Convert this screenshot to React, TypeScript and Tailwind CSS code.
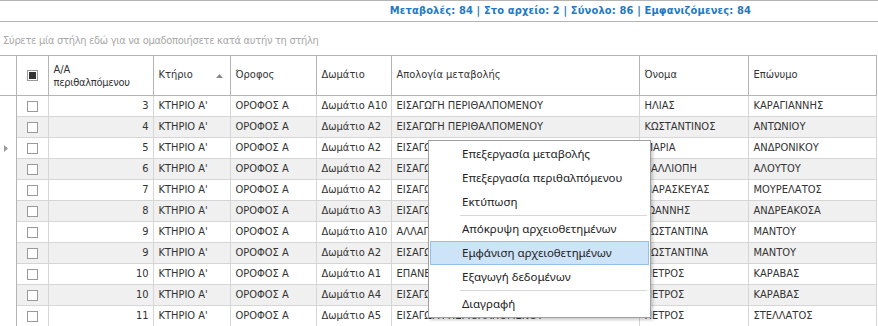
import React from 'react';

const ROWS = [
  ['3', 'Δωμάτιο A10', 'ΕΙΣΑΓΩΓΗ ΠΕΡΙΘΑΛΠΟΜΕΝΟΥ', 'ΗΛΙΑΣ', 'ΚΑΡΑΓΙΑΝΝΗΣ'],
  ['4', 'Δωμάτιο A2', 'ΕΙΣΑΓΩΓΗ ΠΕΡΙΘΑΛΠΟΜΕΝΟΥ', 'ΚΩΣΤΑΝΤΙΝΟΣ', 'ΑΝΤΩΝΙΟΥ'],
  ['5', 'Δωμάτιο A2', 'ΕΙΣΑΓΩΓΗ ΠΕΡΙΘΑΛΠΟΜΕΝΟΥ', 'ΜΑΡΙΑ', 'ΑΝΔΡΟΝΙΚΟΥ'],
  ['6', 'Δωμάτιο A2', 'ΕΙΣΑΓΩΓΗ ΠΕΡΙΘΑΛΠΟΜΕΝΟΥ', 'ΚΑΛΛΙΟΠΗ', 'ΑΛΟΥΤΟΥ'],
  ['7', 'Δωμάτιο A2', 'ΕΙΣΑΓΩΓΗ ΠΕΡΙΘΑΛΠΟΜΕΝΟΥ', 'ΠΑΡΑΣΚΕΥΑΣ', 'ΜΟΥΡΕΛΑΤΟΣ'],
  ['8', 'Δωμάτιο A3', 'ΕΙΣΑΓΩΓΗ ΠΕΡΙΘΑΛΠΟΜΕΝΟΥ', 'ΙΩΑΝΝΗΣ', 'ΑΝΔΡΕΑΚΟΣΑ'],
  ['9', 'Δωμάτιο A10', 'ΑΛΛΑΓΗ ΔΩΜΑΤΙΟΥ', 'ΚΩΣΤΑΝΤΙΝΑ', 'ΜΑΝΤΟΥ'],
  ['9', 'Δωμάτιο A2', 'ΕΙΣΑΓΩΓΗ ΠΕΡΙΘΑΛΠΟΜΕΝΟΥ', 'ΚΩΣΤΑΝΤΙΝΑ', 'ΜΑΝΤΟΥ'],
  ['10', 'Δωμάτιο A1', 'ΕΠΑΝΕΙΣΑΓΩΓΗ ΠΕΡΙΘΑΛΠΟΜΕΝΟΥ', 'ΠΕΤΡΟΣ', 'ΚΑΡΑΒΑΣ'],
  ['10', 'Δωμάτιο A4', 'ΕΙΣΑΓΩΓΗ ΠΕΡΙΘΑΛΠΟΜΕΝΟΥ', 'ΠΕΤΡΟΣ', 'ΚΑΡΑΒΑΣ'],
  ['11', 'Δωμάτιο A5', 'ΕΙΣΑΓΩΓΗ ΠΕΡΙΘΑΛΠΟΜΕΝΟΥ', 'ΠΕΤΡΟΣ', 'ΣΤΕΛΛΑΤΟΣ'],
];

const MENU = [
  { label: 'Επεξεργασία μεταβολής' },
  { label: 'Επεξεργασία περιθαλπόμενου' },
  { label: 'Εκτύπωση', sep: true },
  { label: 'Απόκρυψη αρχειοθετημένων' },
  { label: 'Εμφάνιση αρχειοθετημένων', active: true },
  { label: 'Εξαγωγή δεδομένων', sep: true },
  { label: 'Διαγραφή' },
];

const cell = 'border-r border-b border-[#d6d6d6] px-[5px] whitespace-nowrap overflow-hidden';
const head = 'border-r border-b border-[#b4b4b4] font-normal px-[5px]';

function Box({ checked }: { checked?: boolean }) {
  return (
    <div className="w-[11px] h-[11px] border border-[#9a9a9a] bg-white mx-auto flex items-center justify-center">
      {checked && <div className="w-[7px] h-[7px] bg-[#333]" />}
    </div>
  );
}

export default function App() {
  return (
    <div
      className="w-[878px] h-[326px] bg-white overflow-hidden relative text-[#333] text-[11px]"
      style={{ fontFamily: '"DejaVu Sans Condensed", "Liberation Sans", sans-serif' }}
    >
      {/* status bar */}
      <div className="h-[22px] border-t border-b border-[#b4b4b4] flex items-center justify-end pr-[127px]">
        <span className="font-bold text-[#1f79c4] tracking-[0.15px]">Μεταβολές: 84 | Στο αρχείο: 2 | Σύνολο: 86 | Εμφανιζόμενες: 84</span>
      </div>

      {/* group panel */}
      <div className="h-[33px] flex items-center pt-[5px] pl-[3px] text-[#a8a8a8] tracking-[-0.3px]">
        Σύρετε μία στήλη εδώ για να ομαδοποιήσετε κατά αυτήν τη στήλη
      </div>

      <table className="table-fixed border-collapse w-[876px] border-t border-[#b4b4b4]">
        <colgroup>
          <col className="w-[16px]" />
          <col className="w-[32px]" />
          <col className="w-[105px]" />
          <col className="w-[77px]" />
          <col className="w-[86px]" />
          <col className="w-[75px]" />
          <col className="w-[248px]" />
          <col className="w-[109px]" />
          <col className="w-[128px]" />
        </colgroup>
        <thead>
          <tr className="h-[40px] text-left">
            <th className="border-r border-b border-[#b4b4b4]" />
            <th className="border-r border-b border-[#b4b4b4]"><Box checked /></th>
            <th className={`${head} leading-[13px] px-[4px]`}>Α/Α<br /><span className="tracking-[-0.3px]">περιθαλπόμενου</span></th>
            <th className={head}>
              <div className="flex items-center justify-between">
                <span>Κτήριο</span>
                <svg width="7" height="4" viewBox="0 0 7 4" className="mr-[2px]"><path d="M0 4 L3.5 0 L7 4 Z" fill="#8a8a8a" /></svg>
              </div>
            </th>
            <th className={head}>Όροφος</th>
            <th className={head}>Δωμάτιο</th>
            <th className={head}>Απολογία μεταβολής</th>
            <th className={head}>Όνομα</th>
            <th className={head}>Επώνυμο</th>
          </tr>
        </thead>
        <tbody>
          {ROWS.map((r, i) => (
            <tr key={i} className={`h-[21px] ${i % 2 === 1 ? 'bg-[#f0f0f0]' : 'bg-white'}`}>
              <td className="border-r border-[#b4b4b4] bg-white">
                {i === 2 && (
                  <svg width="4" height="7" viewBox="0 0 4 7" className="ml-[4px]"><path d="M0 0 L4 3.5 L0 7 Z" fill="#9a9a9a" /></svg>
                )}
              </td>
              <td className={cell}><Box /></td>
              <td className={`${cell} text-right pr-[4px]`}>{r[0]}</td>
              <td className={cell}>ΚΤΗΡΙΟ Α'</td>
              <td className={cell}>ΟΡΟΦΟΣ Α</td>
              <td className={cell}>{r[1]}</td>
              <td className={cell}>{r[2]}</td>
              <td className={cell}>{r[3]}</td>
              <td className={cell}>{r[4]}</td>
            </tr>
          ))}
        </tbody>
      </table>

      {/* context menu */}
      <div
        className="absolute left-[428px] top-[140px] w-[223px] bg-white border border-[#a0a0a0] py-[1px] px-[1px] shadow-[2px_2px_3px_rgba(0,0,0,0.2)] text-[11.5px] text-[#222]"
        style={{ fontFamily: '"Segoe UI", "Noto Sans", sans-serif' }}
      >
        {MENU.map((m) => (
          <React.Fragment key={m.label}>
            <div className={`h-[24px] flex items-center pl-[31px] border ${m.active ? 'bg-[#cde3f7] border-[#93bfe9]' : 'border-transparent'}`}>
              {m.label}
            </div>
            {m.sep && <div className="h-[3px] flex items-center pl-[30px] pr-[2px]"><div className="h-px w-full bg-[#d7d7d7]" /></div>}
          </React.Fragment>
        ))}
      </div>
    </div>
  );
}
